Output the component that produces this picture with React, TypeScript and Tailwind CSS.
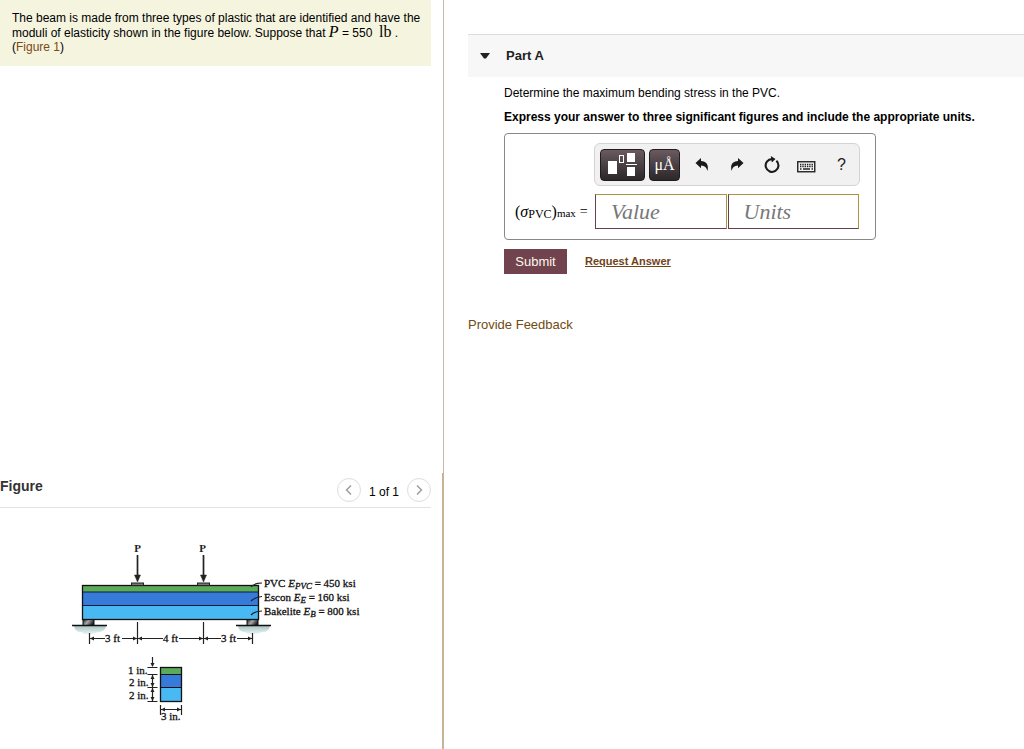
import React from "react";

const SERIF = "font-['Liberation_Serif',serif]";

function TemplatesIcon() {
  return (
    <svg width="30" height="24" viewBox="0 0 30 24" aria-hidden="true">
      <rect x="0" y="8" width="9" height="13" fill="#fff" />
      <rect x="11.5" y="2.5" width="4" height="7" fill="none" stroke="#fff" />
      <rect x="19" y="0" width="8" height="9" fill="#fff" />
      <rect x="18" y="11" width="11" height="1" fill="#fff" />
      <rect x="19" y="14" width="8" height="9" fill="#fff" />
    </svg>
  );
}

function UndoIcon({ flip = false }: { flip?: boolean }) {
  return (
    <svg width="14" height="14" viewBox="0 0 14 14" aria-hidden="true">
      <path
        transform={flip ? "translate(14 0) scale(-1 1)" : undefined}
        d="M0.5 5 6 0v3c4.800.2 8.200 3 6.400 10C11.600 9.700 9.800 7.600 6 7.500v2.700z"
        fill="#1a1a1a"
      />
    </svg>
  );
}

function ResetIcon() {
  return (
    <svg width="16" height="17" viewBox="0 0 16 17" aria-hidden="true">
      <path d="M12.400 4.800A6.400 6.400 0 1 1 8 3.100" fill="none" stroke="#1a1a1a" strokeWidth="2.100" />
      <path d="M6.800 0 11.500 3 7.800 6.500z" fill="#1a1a1a" />
    </svg>
  );
}

function KeyboardIcon() {
  return (
    <svg width="19" height="16" viewBox="0 -4 19 16" aria-hidden="true">
      <rect x="0.750" y="0.750" width="17" height="10" fill="#f6f6f6" stroke="#222" strokeWidth="1.400" />
      <path d="M3 3.500h13M3 5.500h13" stroke="#222" strokeWidth="1.400" strokeDasharray="1.400 0.900" />
      <path d="M3 8h1.500M6 8h7M14.500 8H16" stroke="#222" strokeWidth="1.400" />
    </svg>
  );
}

function Chevron({ right = false }: { right?: boolean }) {
  return (
    <svg width="8" height="12" viewBox="0 0 8 12" aria-hidden="true">
      <path d={right ? "M2 1.500 6.500 6 2 10.500" : "M6 1.500 1.500 6 6 10.500"} fill="none" stroke="#999" strokeWidth="1.400" />
    </svg>
  );
}

function BeamDiagram() {
  return (
    <svg
      width="310"
      height="190"
      viewBox="60 538 310 190"
      role="img"
      aria-label="Layered beam with two loads P and its cross-section"
      className={`${SERIF} text-[11px]`}
    >
      <defs>
        <linearGradient id="ground" x1="0" y1="0" x2="0" y2="1">
          <stop offset="0" stopColor="#a9c4c5" />
          <stop offset="1" stopColor="#eef5f5" />
        </linearGradient>
        <linearGradient id="pin" x1="0" y1="0" x2="1" y2="0.400">
          <stop offset="0" stopColor="#222" />
          <stop offset="0.500" stopColor="#aaa" />
          <stop offset="1" stopColor="#222" />
        </linearGradient>
      </defs>

      {[88, 252].map((x) => (
        <g key={x}>
          <path d={`M${x - 14} 626h32q-1 6-8 6-3 2-8 2-6 1-9-2-6 0-7-6z`} fill="url(#ground)" />
          <rect x={x - 5} y="619.500" width="11" height="6" fill="url(#pin)" stroke="#111" />
          <path d={`M${x - 16} 625.500h35`} stroke="#111" strokeWidth="1.300" />
        </g>
      ))}

      <rect x="82.500" y="585.500" width="176" height="7" fill="#5bab5b" />
      <rect x="82.500" y="592" width="176" height="13.500" fill="#367bd9" />
      <rect x="82.500" y="605.500" width="176" height="14" fill="#48b9f2" />
      <path d="M82.500 592h176M82.500 605.500h176" stroke="#111c38" strokeWidth="1.200" />
      <rect x="82.500" y="585.500" width="176" height="34" fill="none" stroke="#111" strokeWidth="1.300" />

      {[137.5, 203.5].map((x) => (
        <g key={x} stroke="#222">
          <rect x={x - 6} y="583" width="12" height="2.500" fill="#777" />
          <path d={`M${x} 555v21`} strokeWidth="1.700" />
          <path d={`M${x - 3} 575h6l-3 7z`} fill="#222" strokeWidth="0.500" />
          <path d={`M${x} 622v22`} strokeWidth="1.200" />
        </g>
      ))}
      <g className="font-bold" fill="#222" textAnchor="middle">
        <text x="137.500" y="552">P</text>
        <text x="202.500" y="552">P</text>
      </g>

      <g fill="none" stroke="#222" strokeWidth="1.200">
        <path d="M89.500 633v11M252.500 633v11" />
        <path d="M90 638.500h15M122 638.500h41M179 638.500h42M237 638.500h15" />
        <path d="M251 587q3-4 11-4M251 601q4-4 11-4.500M251 615q4-4 11-4" />
      </g>
      <path
        d="M90 638.500l4-2v4zM137 638.500l-4-2v4zM138 638.500l4-2v4zM203 638.500l-4-2v4zM204 638.500l4-2v4zM252 638.500l-4-2v4z"
        fill="#222"
      />

      <g fill="#111" stroke="#111" strokeWidth="0.300">
        <text x="105" y="642">3 ft</text>
        <text x="163" y="642">4 ft</text>
        <text x="221" y="642">3 ft</text>
        <text x="264" y="587">
          PVC <tspan fontStyle="italic">E</tspan>
          <tspan fontStyle="italic" fontSize="9" dy="2">PVC</tspan>
          <tspan dy="-2"> = 450 ksi</tspan>
        </text>
        <text x="264" y="601">
          Escon <tspan fontStyle="italic">E</tspan>
          <tspan fontStyle="italic" fontSize="9" dy="2">E</tspan>
          <tspan dy="-2"> = 160 ksi</tspan>
        </text>
        <text x="264" y="615">
          Bakelite <tspan fontStyle="italic">E</tspan>
          <tspan fontStyle="italic" fontSize="9" dy="2">B</tspan>
          <tspan dy="-2"> = 800 ksi</tspan>
        </text>
        <text x="128" y="674">1 in.</text>
        <text x="129" y="686">2 in.</text>
        <text x="129" y="699">2 in.</text>
        <text x="161" y="720">3 in.</text>
      </g>

      <rect x="160.500" y="667.500" width="21" height="7" fill="#5bab5b" />
      <rect x="160.500" y="674.500" width="21" height="13" fill="#367bd9" />
      <rect x="160.500" y="687.500" width="21" height="14" fill="#48b9f2" />
      <path d="M160.500 674.500h21M160.500 687.500h21" stroke="#111" strokeWidth="1.200" />
      <rect x="160.500" y="667.500" width="21" height="34" fill="none" stroke="#111" strokeWidth="1.300" />
      <path
        d="M152.500 657v9M147.500 667.500h10M147.500 674.500h10M147.500 687.500h10M147.500 701.500h10M152.500 675v26M160.500 705v10M181.500 705v10M161 709.500h20"
        fill="none"
        stroke="#222"
        strokeWidth="1.200"
      />
      <path
        d="M152.500 667l-2-4h4zM152.500 675l-2 4h4zM152.500 687l-2-4h4zM152.500 688l-2 4h4zM152.500 701l-2-4h4zM161 709.500l4-2v4zM181 709.500l-4-2v4z"
        fill="#222"
      />
    </svg>
  );
}

const darkButton =
  "flex h-8 items-center justify-center rounded border border-[#221c1e] bg-linear-to-b from-[#6a5b60] to-[#2c2729] text-white";
const toolButton = "flex h-8 w-[35px] items-center justify-center text-[#1a1a1a]";
const fieldBox =
  "h-[35px] w-full min-w-0 border border-t-[#ad9443] border-r-[#ad9443] border-b-[#65414c] border-l-[#65414c] bg-white px-[15px] text-[22px] italic text-[#333] placeholder:text-[#777] placeholder:opacity-100";
const pagerButton = "flex size-6 items-center justify-center rounded-full border border-[#ddd] bg-white";

export default function App() {
  return (
    <div className="grid min-h-screen grid-cols-[444fr_580fr] bg-white font-['Liberation_Sans',Arial,sans-serif] text-xs text-black">
      <aside className="flex flex-col">
        <div className="flex-1 border-r border-[#c9b9a8] pr-3">
          <p className="bg-[#f5f4df] pt-[11px] pr-1 pb-3 pl-3 leading-[14px]">
            The beam is made from three types of plastic that are identified and have the moduli of elasticity shown in
            the figure below. Suppose that <i className={`${SERIF} text-base leading-[14px]`}>P</i> = 550 &nbsp;
            <span className={`${SERIF} text-base leading-[14px]`}>lb</span> .
            <br />(<a href="#figure" className="text-[#7a4b12]">Figure 1</a>)
          </p>
        </div>
        <section id="figure" className="min-h-[276px] border-r-2 border-[#c9b396] pr-[11px]">
          <div className="flex h-[35px] items-center justify-between border-b border-[#e3e3e3]">
            <h2 className="pb-2 text-sm font-bold text-[#333]">Figure</h2>
            <div className="flex items-center gap-2">
              <button type="button" aria-label="Previous figure" className={pagerButton}>
                <Chevron />
              </button>
              <span className="pt-1">1 of 1</span>
              <button type="button" aria-label="Next figure" className={pagerButton}>
                <Chevron right />
              </button>
            </div>
          </div>
          <div className="pt-[30px] pl-[60px]">
            <BeamDiagram />
          </div>
        </section>
      </aside>

      <main className="pt-[34px] pl-6">
        <header className="flex h-[43px] items-center border-t border-[#ddd] bg-[#f7f7f7] pl-3">
          <button type="button" aria-expanded="true" className="flex items-center gap-4 text-[13px] font-bold text-[#222]">
            <svg width="10" height="6" viewBox="0 0 10 6" aria-hidden="true">
              <path d="M0 0h10L6 5.500H4z" fill="#222" />
            </svg>
            Part A
          </button>
        </header>

        <div className="pl-9">
          <p className="pt-2 leading-4">Determine the maximum bending stress in the PVC.</p>
          <p className="pt-2 leading-4 font-bold">
            Express your answer to three significant figures and include the appropriate units.
          </p>

          <div className="mt-2 grid w-fit grid-cols-[80px_266px] gap-y-2 rounded border border-[#888] pt-[9px] pr-[15px] pb-[10px] pl-[9px]">
            <div className="col-start-2 flex h-[43px] items-center rounded-md border border-[#d3d3d3] bg-[#f1f1f1] pl-[5px]">
              <button type="button" aria-label="Templates" className={`${darkButton} mr-1 w-[45px]`}>
                <TemplatesIcon />
              </button>
              <button type="button" aria-label="Symbols" className={`${darkButton} ${SERIF} mr-1 w-[31px] text-base`}>
                μÅ
              </button>
              <button type="button" aria-label="Undo" className={toolButton}>
                <UndoIcon />
              </button>
              <button type="button" aria-label="Redo" className={toolButton}>
                <UndoIcon flip />
              </button>
              <button type="button" aria-label="Reset" className={toolButton}>
                <ResetIcon />
              </button>
              <button type="button" aria-label="Keyboard shortcuts" className={toolButton}>
                <KeyboardIcon />
              </button>
              <button type="button" aria-label="Help" className={`${toolButton} text-base`}>
                ?
              </button>
            </div>
            <label htmlFor="value" className={`${SERIF} flex items-center whitespace-nowrap pl-px text-base`}>
              <span>(</span>
              <i>σ</i>
              <span className="pt-1 text-xs">PVC</span>
              <span>)</span>
              <span className="pt-1 text-[11px]">max</span>
              <span className="pl-1 text-sm">=</span>
            </label>
            <div className="flex gap-px px-px">
              <input id="value" type="text" placeholder="Value" className={`${fieldBox} ${SERIF}`} />
              <input type="text" aria-label="Units" placeholder="Units" className={`${fieldBox} ${SERIF}`} />
            </div>
          </div>

          <div className="flex items-center gap-[18px] pt-[9px]">
            <button type="button" className="h-[25px] w-[63px] bg-[#70434e] text-[13px] text-[#fff8e8]">
              Submit
            </button>
            <a href="#answer" className="text-[11px] font-bold text-[#704218] underline">
              Request Answer
            </a>
          </div>
        </div>

        <a href="#feedback" className="mt-[42px] inline-block text-[13px] leading-[18px] text-[#704a12]">
          Provide Feedback
        </a>
      </main>
    </div>
  );
}
